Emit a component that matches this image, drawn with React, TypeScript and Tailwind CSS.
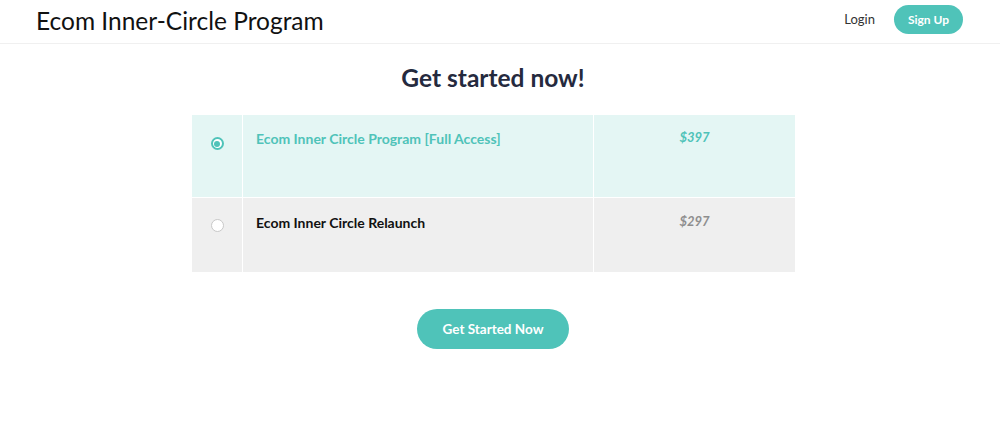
import React from "react";

export default function App() {
  return (
    <div className="min-h-[431px] w-full bg-white" style={{ fontFamily: "Lato, 'Open Sans', sans-serif" }}>
      <header className="flex h-[44px] items-start justify-between border-b border-[#f0f0f0] pl-[36px] pr-[37px]">
        <div className="pt-[6px] text-[24.5px] leading-[30px] text-[#111]">Ecom Inner-Circle Program</div>
        <div className="flex items-center pt-[5px]">
          <span className="mr-[19px] text-[13px] text-[#333]">Login</span>
          <span className="flex h-[29px] w-[69px] items-center justify-center rounded-full bg-[#4fc3b9] text-[12px] font-bold text-white">Sign Up</span>
        </div>
      </header>
      <h1 className="mt-[19px] pr-[14px] text-center text-[24.5px] font-bold leading-[30px] text-[#252a3e]">Get started now!</h1>
      <div className="ml-[192px] mt-[22px] w-[603px]">
        <div className="flex h-[82px] bg-[#e4f6f4]">
          <div className="flex w-[50px] justify-center pt-[22px]">
            <span className="flex h-[13px] w-[13px] items-center justify-center rounded-full border-2 border-[#4fc3b9] bg-white">
              <span className="h-[6px] w-[6px] rounded-full bg-[#4fc3b9]" />
            </span>
          </div>
          <div className="w-px bg-white" />
          <div className="w-[350px] pl-[13px] pt-[13px] text-[14px] font-bold text-[#4fc3b9]">Ecom Inner Circle Program [Full Access]</div>
          <div className="w-px bg-white" />
          <div className="flex-1 pt-[13px] text-center text-[13px] font-bold italic text-[#4fc3b9]">$397</div>
        </div>
        <div className="h-px bg-white" />
        <div className="flex h-[74px] bg-[#efefef]">
          <div className="flex w-[50px] justify-center pt-[21px]">
            <span className="h-[13px] w-[13px] rounded-full border border-[#c8c8c8] bg-white" />
          </div>
          <div className="w-px bg-white" />
          <div className="w-[350px] pl-[13px] pt-[14px] text-[14px] font-bold text-[#111]">Ecom Inner Circle Relaunch</div>
          <div className="w-px bg-white" />
          <div className="flex-1 pt-[14px] text-center text-[13px] font-bold italic text-[#8e8e8e]">$297</div>
        </div>
      </div>
      <div className="mt-[37px] flex justify-center pr-[14px]">
        <span className="flex h-[40px] w-[152px] items-center justify-center rounded-full bg-[#4fc3b9] text-[13.5px] font-bold text-white">Get Started Now</span>
      </div>
    </div>
  );
}
